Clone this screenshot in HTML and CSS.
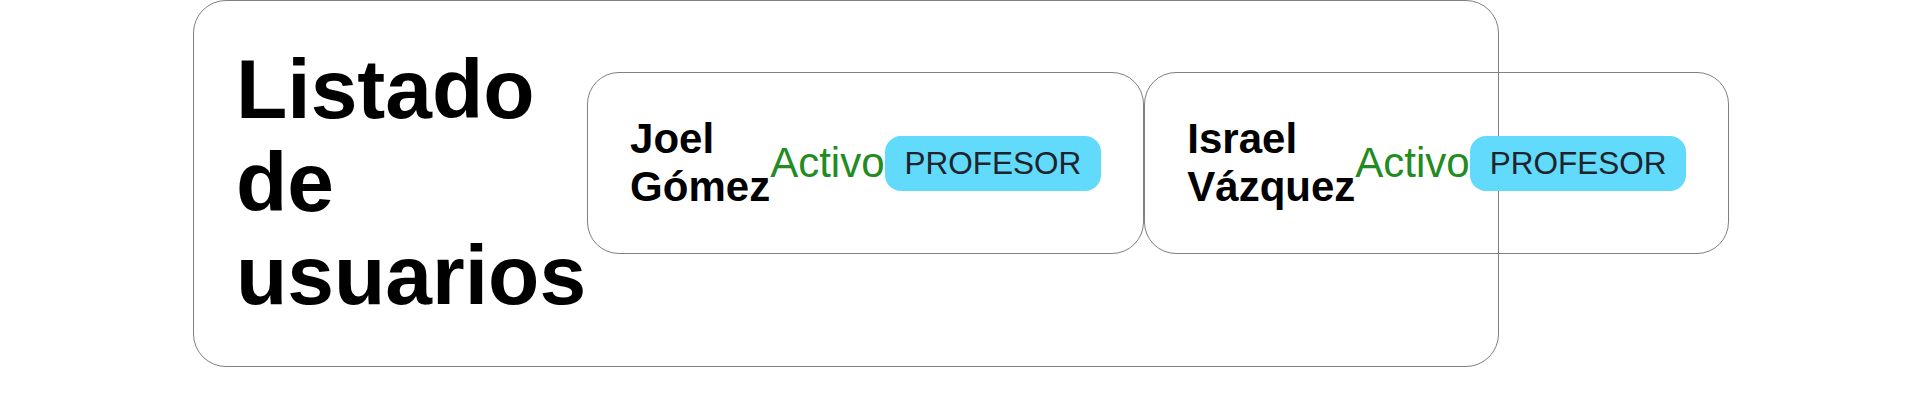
FILE: index.html
```html
<!DOCTYPE html>
<html lang="es">
<head>
<meta charset="utf-8">
<title>Listado de usuarios</title>
<link rel="stylesheet" href="styles.css">
</head>
<body>
  <div class="panel">
    <h1 class="title">Listado de usuarios</h1>
    <div class="card">
      <span class="name">Joel Gómez</span>
      <span class="status">Activo</span>
      <span class="role">PROFESOR</span>
    </div>
    <div class="card">
      <span class="name">Israel Vázquez</span>
      <span class="status">Activo</span>
      <span class="role">PROFESOR</span>
    </div>
  </div>
</body>
</html>
```
FILE: styles.css
```css
html, body {
  margin: 0;
  padding: 0;
  background: #ffffff;
}

body {
  font-family: "Liberation Sans", Arial, sans-serif;
  color: #000;
}

.panel {
  box-sizing: border-box;
  width: 1306px;
  margin: 0 0 0 193px;
  padding: 42px 42px 44px 42px;
  border: 1px solid #808080;
  border-radius: 33px;
  display: flex;
  align-items: flex-start;
}

.title {
  margin: 0 1px 0 0;
  font-size: 84px;
  line-height: 93px;
  font-weight: bold;
}

.card {
  box-sizing: border-box;
  height: 182px;
  margin-top: 29px;
  padding: 0 42px;
  border: 1px solid #808080;
  border-radius: 32px;
  display: flex;
  align-items: center;
}

.name {
  font-size: 42px;
  font-weight: bold;
  line-height: 48px;
}

.status {
  font-size: 42px;
  color: #228b22;
}

.role {
  font-size: 31.5px;
  color: #20232a;
  background: #61dafb;
  padding: 9px 20px;
  border-radius: 16px;
  white-space: nowrap;
}
```
